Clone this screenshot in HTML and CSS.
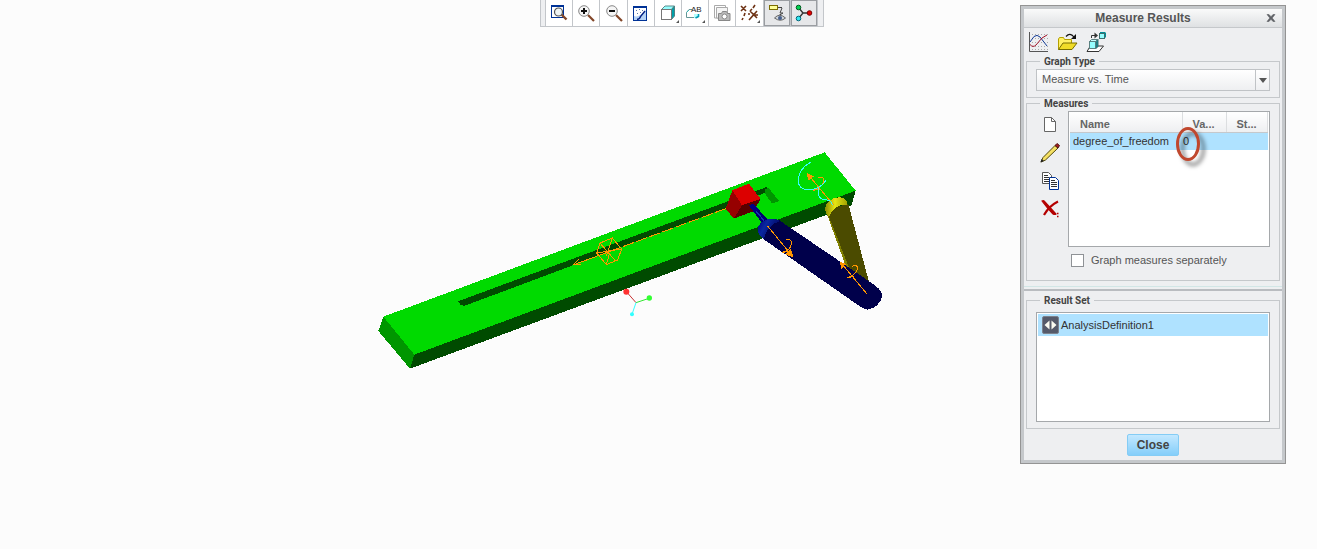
FILE: index.html
```html
<!DOCTYPE html>
<html lang="en">
<head>
    <meta charset="UTF-8">
    <meta name="viewport" content="width=device-width, initial-scale=1.0">
    <title>Measure Results</title>
    <link rel="stylesheet" href="styles.css">
</head>
<body>

<main class="viewport">

    <!-- 3D model -->
    <svg class="model" viewBox="0 0 1530 666" shape-rendering="crispEdges" role="img" aria-label="Slider crank mechanism">
        <defs>
            <linearGradient id="blue-head" x1="0" y1="0" x2="1" y2="0.5">
                <stop offset="0" stop-color="#000078"/>
                <stop offset="0.4" stop-color="#0a28a0"/>
                <stop offset="1" stop-color="#00005a"/>
            </linearGradient>
            <linearGradient id="yellow-head" x1="0" y1="0" x2="1" y2="0">
                <stop offset="0" stop-color="#8c8c00"/>
                <stop offset="0.45" stop-color="#e6e614"/>
                <stop offset="1" stop-color="#a0a000"/>
            </linearGradient>
        </defs>
        <!-- Green rail -->
        <polygon fill="#00da00" points="25,500 1349,7 1442,122 118,614"/>
        <polygon fill="#009600" points="25,500 10,543 105,656 118,614"/>
        <polygon fill="#004b00" points="118,614 1442,122 1429,167 105,656"/>
        <!-- Slot -->
        <polygon fill="#004b00" points="249,454 1175,111 1174,127 1035,181 270,467 258,466"/>
        <polygon fill="#009600" points="1170,119 1180,113 1212,153 1191,161 1170,130"/>
        <!-- Slide axis -->
        <g fill="none" stroke="#ff9600" stroke-width="3">
            <path d="M594 345L705 304M594 345l18-18M594 345l24-2"/>
            <path d="M705 304L1060 173" stroke-dasharray="34 8"/>
            <path d="M675 279L712 264L740 297L728 330L694 344L665 309ZM675 279l45 52M712 264l-18 55M665 309l75-12M694 344l10-36"/>
        </g>
        <!-- Yellow link -->
        <g transform="translate(975 -30)">
            <polygon fill="#808000" points="380,220 392,222 450,384 440,386"/>
            <polygon fill="#4b4b00" points="386,228 392,212 410,200 445,192 508,430 470,412 448,385"/>
            <path fill="url(#yellow-head)" d="M375 208C374 188 398 170 420 172C436 174 442 182 442 195C424 192 400 198 388 229C380 226 376 218 375 208Z"/>
        </g>
        <!-- Blue rod -->
        <g transform="translate(975 -30)">
            <polygon fill="#00006e" points="147,197 160,190 202,238 188,252"/>
            <path stroke="#1432b4" stroke-width="4" d="M154 196L192 242"/>
            <path fill="#00004b" d="M175 270C180 245 210 230 238 241L512 427C530 436 548 456 547 469C542 490 525 506 502 509C496 508 486 504 478 498L190 297C180 289 174 281 175 270Z"/>
            <path fill="url(#blue-head)" d="M174 265C176 243 212 226 240 243C218 250 196 268 192 297C180 290 172 280 174 265Z"/>
        </g>
        <!-- Red slider -->
        <g transform="translate(975 -30)">
            <polygon fill="#dc0000" points="97,151 147,131 182,177 126,196"/>
            <polygon fill="#960000" points="97,151 126,196 101,236 77,206"/>
            <polygon fill="#5a0000" points="126,196 182,177 160,214 101,236"/>
            <polygon fill="#000082" points="147,197 160,190 176,209 164,219"/>
        </g>
        <!-- Joint symbols -->
        <g transform="translate(975 -30)" fill="none" stroke="#ff9600" stroke-width="3">
            <path d="M202 257L278 350M278 350l-20-8M278 350l-6-22M258 298c14-2 18 6 16 14c-2 14-14 22-28 25l18-2M262 330l10 14"/>
            <path d="M500 461L422 367M422 367l17 7M422 367l3 20M455 380c14-8 20 0 17 8c-4 14-14 20-30 25l20-4"/>
            <path d="M400 194L322 101M322 101l19 10M322 101l4 20M354 114c12-5 20 0 16 12c-4 14-14 20-30 25l20-4"/>
            <path fill="#ff9600" d="M278 350l-18-8l12-12ZM322 101l14 8l-8 10ZM422 367l12 6l-8 10Z"/>
            <path stroke="#32ffff" d="M332 67C300 83 285 120 302 142C320 156 360 150 378 121M356 142C352 165 358 177 370 178C382 179 398 182 397 196"/>
        </g>
        <!-- Orientation triad -->
        <g stroke-width="3" shape-rendering="auto">
            <path stroke="#c83232" d="M755 426L783 458"/>
            <path stroke="#32e632" d="M783 458L822 445"/>
            <path stroke="#32ffff" d="M783 458L771 493"/>
            <circle cx="754" cy="425" r="9" fill="#ff3232"/>
            <circle cx="823" cy="444" r="8" fill="#32ff32"/>
            <circle cx="771" cy="493" r="6" fill="#32ffff"/>
        </g>
    </svg>

    <!-- Graphics toolbar -->
    <div class="toolbar">
        <button type="button" aria-label="Refit">
            <svg viewBox="0 0 24 24">
                <rect x="4.500" y="4.500" width="12" height="12" fill="#fff" stroke="#003296"/>
                <path d="M4 5h13" stroke="#003296" stroke-width="2"/>
                <path d="M14.500 13.500l5 5" stroke="#824628" stroke-width="2.4"/>
                <circle cx="11.500" cy="11" r="4" fill="#f0f5f5" stroke="#555" stroke-width="1.2"/>
            </svg>
        </button>
        <button type="button" aria-label="Zoom In">
            <svg viewBox="0 0 24 24">
                <path d="M14 14l6 6" stroke="#824628" stroke-width="2.2"/>
                <circle cx="10" cy="10" r="5.3" fill="#f5f5f5" stroke="#888"/>
                <path d="M7 10h6M10 7v6" stroke="#111" stroke-width="2"/>
            </svg>
        </button>
        <button type="button" aria-label="Zoom Out">
            <svg viewBox="0 0 24 24">
                <path d="M14 14l6 6" stroke="#824628" stroke-width="2.2"/>
                <circle cx="10" cy="10" r="5.3" fill="#f5f5f5" stroke="#888"/>
                <path d="M7 10h6" stroke="#111" stroke-width="2"/>
            </svg>
        </button>
        <button type="button" aria-label="Repaint">
            <svg viewBox="0 0 24 24">
                <rect x="4.500" y="5.500" width="13" height="14" fill="#fff" stroke="#003296"/>
                <path d="M4 6h14" stroke="#003296" stroke-width="2"/>
                <path d="M5 19V15Q10 17 17 9V19Z" fill="#b4d2f5"/>
                <path d="M16 10L11.500 15.500Q11 18 8 18.500" fill="none" stroke="#001e82" stroke-width="1.4"/>
                <path d="M7 9.500h1M10 8.500h1M8 12.500h1M11 11.500h1M13 9.500h1" stroke="#5a78aa"/>
            </svg>
        </button>
        <button type="button" aria-label="Display Style">
            <svg viewBox="0 0 24 24">
                <path d="M5.500 8.500L9 5H18.500L15.500 8.500Z" fill="#96ffff" stroke="#5a8c8c"/>
                <path d="M15.500 8.500L18.500 5V15L15.500 18.500Z" fill="#00a0aa" stroke="#508282"/>
                <rect x="5.500" y="8.500" width="10" height="10" fill="#fff" stroke="#777"/>
                <path d="M23 19v3h-3Z" fill="#555"/>
            </svg>
        </button>
        <button type="button" aria-label="Saved Orientations">
            <svg viewBox="0 0 24 24">
                <path d="M9 8.500H6L3.500 11.500V16.500H12" fill="#fff" stroke="#649696"/>
                <path d="M3.500 11.500L6 9" stroke="#32b4b4"/>
                <path d="M11 13h4v4h-4z" fill="#b4ffff"/>
                <path d="M15.500 13v2.500l-3 1.500" fill="none" stroke="#009bb4" stroke-width="1.6"/>
                <text class="icon-text" x="8" y="11">AB</text>
                <path d="M22 19v3h-3Z" fill="#555"/>
            </svg>
        </button>
        <button type="button" aria-label="View Manager">
            <svg viewBox="0 0 24 24">
                <path d="M4.500 4.500H15.500V17H4.500Z" fill="#fff" stroke="#aaa"/>
                <path d="M6.500 6.500H17.500V17H6.500Z" fill="#f5f5f5" stroke="#aaa"/>
                <path d="M8.500 12.500h3l1-2h4l1 2h2.500v7H8.500Z" fill="#bbb" stroke="#888"/>
                <circle cx="14.500" cy="15.500" r="2.500" fill="#fff" stroke="#888"/>
            </svg>
        </button>
        <button type="button" aria-label="Datum Display">
            <svg viewBox="0 0 24 24">
                <path d="M3 5l5 5M8 5l-5 5M12 10l7 7M19 10l-8 9M17 4l-2 3M14 8l-2 2M7 12l-1 3M5 17l-1 2M10 13h2M17 14h3" stroke="#6e3214" stroke-width="1.6"/>
                <path d="M22 19v3h-3Z" fill="#555"/>
            </svg>
        </button>
        <button type="button" class="pressed" aria-pressed="true" aria-label="Annotation Display">
            <svg viewBox="0 0 24 24">
                <rect x="4.500" y="4.500" width="8" height="4" fill="#ffff96" stroke="#7d6e00"/>
                <path d="M13 6.500h4M17 7l-2 5h3l-5 3" fill="none" stroke="#444"/>
                <path d="M9.500 17q5-5.500 11 0q-5 4.500-11 0Z" fill="#d2d7dc" stroke="#666"/>
                <circle cx="15" cy="17" r="2" fill="#465f8c"/>
            </svg>
        </button>
        <button type="button" class="pressed" aria-pressed="true" aria-label="Spin Center">
            <svg viewBox="0 0 24 24">
                <path d="M6.500 6.500L11 12L6.500 17.500M11 12h7" fill="none" stroke="#333" stroke-width="1.4"/>
                <circle cx="6.500" cy="6.500" r="2.300" fill="#00d250" stroke="#005a1e"/>
                <circle cx="17.500" cy="12" r="2.300" fill="#e60000" stroke="#780000"/>
                <circle cx="6.500" cy="17.500" r="2.300" fill="#32e6f0" stroke="#006478"/>
            </svg>
        </button>
    </div>

    <!-- Measure Results dialog -->
    <section class="dialog" aria-labelledby="dialog-title">
        <header class="title-bar">
            <h1 id="dialog-title">Measure Results</h1>
            <button type="button" class="close-x" aria-label="Close window">
                <svg viewBox="0 0 10 10"><path d="M1 1.500h2l2 2.200l2-2.200h2L6.200 5L9 8.500H7L5 6.300L3 8.500H1L3.800 5Z" fill="#5f6266" stroke="#5f6266" stroke-width="0.600"/></svg>
            </button>
        </header>

        <div class="dialog-tools">
            <button type="button" aria-label="Graph">
                <svg viewBox="0 0 24 24">
                    <path d="M5 4.500h16M5 8.500h16M5 12.500h16M5 16.500h16M5 19.500h16" stroke="#aaa" stroke-dasharray="1 2"/>
                    <path d="M2.500 2v19.500H21" fill="none" stroke="#555"/>
                    <path d="M3 12L7 6.500Q10 4 13 7L20 16" fill="none" stroke="#143c96"/>
                    <path d="M3 14.500Q6 18 9 15L15 8L20 5" fill="none" stroke="#a01428"/>
                </svg>
            </button>
            <button type="button" aria-label="Open">
                <svg viewBox="0 0 24 24">
                    <path d="M2.500 19.500V9l1-1.500h4l1 2h7v4" fill="#fff064" stroke="#b4a000"/>
                    <path d="M2.500 19.500L7 13h14l-5 6.500Z" fill="#f0dc28" stroke="#786e00"/>
                    <path d="M10 6.500Q14 2 18 7" fill="none" stroke="#111" stroke-width="1.200"/>
                    <path d="M20 4v5h-5Z" fill="#111"/>
                </svg>
            </button>
            <button type="button" aria-label="Load Result Set">
                <svg viewBox="0 0 24 24">
                    <path d="M5 16.500L2 21.500H14L18.500 16H13" fill="#fff" stroke="#333"/>
                    <path d="M4.500 11.500l2-2h6l-1.500 2Z" fill="#c8ffff" stroke="#5a8282"/>
                    <path d="M11 11.500l2-2v7l-2 2Z" fill="#008c96" stroke="#3c6e6e"/>
                    <rect x="4.500" y="11.500" width="6" height="7" fill="#96ffff" stroke="#5a8282"/>
                    <rect x="14.500" y="3.500" width="5" height="5" fill="#96ffff" stroke="#3c6e6e"/>
                    <path d="M20.500 2.500v5M15 2.500h5" stroke="#008c96"/>
                    <path d="M6.500 8V5.500H11" fill="none" stroke="#333"/>
                    <path d="M9.500 2.500l3.500 3l-3.500 3Z" fill="#333"/>
                </svg>
            </button>
        </div>

        <fieldset class="graph-type">
            <legend><label for="graph-type">Graph Type</label></legend>
            <div class="select-box">
                <select id="graph-type">
                    <option>Measure vs. Time</option>
                </select>
                <span class="select-arrow"></span>
            </div>
        </fieldset>

        <fieldset class="measures">
            <legend>Measures</legend>
            <div class="measures-row">
                <div class="measure-tools">
                    <button type="button" aria-label="New measure">
                        <svg viewBox="0 0 24 24">
                            <path d="M6.500 5.500h7l4 4v10h-11Z" fill="#fff" stroke="#666"/>
                            <path d="M13.500 5.500v4h4" fill="none" stroke="#666"/>
                        </svg>
                    </button>
                    <button type="button" aria-label="Edit measure">
                        <svg viewBox="0 0 24 24">
                            <path d="M3 22l2-4.500L17 5.500l3 2.500L7.500 20Z" fill="#f5e164" stroke="#50460a"/>
                            <path d="M17 5.500l2-2l2.500 2l-1.500 2.500Z" fill="#a01e1e" stroke="#501414"/>
                            <path d="M2.500 22.500l1-3.500l2.500 2Z" fill="#222"/>
                        </svg>
                    </button>
                    <button type="button" aria-label="Copy measure">
                        <svg viewBox="0 0 24 24">
                            <path d="M4.500 4.500h6l3 3v8h-9Z" fill="#fff" stroke="#555"/>
                            <path d="M6 7.500h4M6 9.500h5M6 11.500h5M6 13.500h5" stroke="#333"/>
                            <path d="M11.500 9.500h6l3 3v9h-9Z" fill="#fff" stroke="#003296"/>
                            <path d="M13 12.500h4M13 14.500h6M13 16.500h6M13 18.500h6" stroke="#333"/>
                        </svg>
                    </button>
                    <button type="button" aria-label="Delete measure">
                        <svg viewBox="0 0 24 24">
                            <path d="M4 5q2-1 3 1l11 12q-1 1-3 0Q9 12 4 5Z" fill="#b40000" stroke="#b40000" stroke-width="1.200"/>
                            <path d="M20 5.500Q11 10 6 19" fill="none" stroke="#b40000" stroke-width="2.200"/>
                            <path d="M19 17.500h1.500M19 20.500h1.500" stroke="#b40000" stroke-width="1.500"/>
                        </svg>
                    </button>
                </div>
                <div class="measure-list">
                    <table>
                        <thead>
                            <tr>
                                <th class="col-name">Name</th>
                                <th class="col-value">Va...</th>
                                <th>St...</th>
                            </tr>
                        </thead>
                        <tbody>
                            <tr>
                                <td>degree_of_freedom</td>
                                <td class="value">0<span class="callout"></span></td>
                                <td></td>
                            </tr>
                        </tbody>
                    </table>
                </div>
            </div>
            <div class="check-row">
                <input type="checkbox" id="separate">
                <label for="separate">Graph measures separately</label>
            </div>
        </fieldset>

        <hr>

        <fieldset class="result-set">
            <legend>Result Set</legend>
            <ul class="result-list">
                <li>
                    <svg viewBox="0 0 18 18">
                        <rect x="0.500" y="0.500" width="16" height="17" rx="1.500" fill="#555a6a" stroke="#7d828c"/>
                        <path d="M2.500 9l5-4.500v9ZM14.500 9l-5-4.500v9Z" fill="#fafaf0"/>
                    </svg>
                    AnalysisDefinition1
                </li>
            </ul>
        </fieldset>

        <footer class="dialog-footer">
            <button type="button" class="close-button">Close</button>
        </footer>
    </section>

</main>

</body>
</html>
```

FILE: styles.css
```css
/* General styling */
* {
    box-sizing: border-box;
}

body {
    margin: 0;
    background-color: #fcfcfc;
    color: #333;
    font-family: "Liberation Sans", Arial, sans-serif;
    font-size: 11px;
}

button {
    padding: 0;
    border: 0;
    background: none;
    font: inherit;
    color: inherit;
}

svg {
    display: block;
}

.viewport {
    position: relative;
    min-height: 100vh;
    overflow: hidden;
}

/* Model on the canvas */
.model {
    position: absolute;
    left: 375px;
    top: 150px;
    width: 510px;
}

/* Graphics toolbar */
.toolbar {
    position: absolute;
    top: 0;
    left: 540px;
    display: flex;
    width: 284px;
    padding: 0 5px 0 4px;
    border: 1px solid #c3c6ca;
    border-top: 0;
    background-color: #eeeff1;
}

.toolbar button {
    display: flex;
    flex: 1;
    justify-content: center;
    padding: 1px 0;
    border-left: 1px solid #c3c6ca;
    background-color: #fff;
}

.toolbar button:last-child {
    border-right: 1px solid #c3c6ca;
}

.toolbar .pressed {
    background-color: #e6e7e9;
    box-shadow: inset 0 0 0 1px #9a9da1;
}

.toolbar svg,
.dialog-tools svg,
.measure-tools svg {
    flex: none;
    width: 24px;
    height: 24px;
}

.icon-text {
    font-family: "Liberation Sans", Arial, sans-serif;
    font-size: 8px;
    fill: #222;
}

/* Dialog window */
.dialog {
    position: absolute;
    top: 5px;
    right: 31px;
    width: 266px;
    border: 4px solid #c5c8cb;
    outline: 1px solid #949494;
    outline-offset: -1px;
    background-color: #eeeff1;
}

.title-bar {
    display: flex;
    align-items: center;
    height: 19px;
    padding-right: 6px;
    border-bottom: 1px solid #c5c8cb;
    background: linear-gradient(#fafafa, #dfe1e3);
}

.title-bar h1 {
    flex: 1;
    margin: 0;
    padding-right: 4px;
    font-size: 12px;
    line-height: 18px;
    text-align: center;
    color: #555;
}

.close-x svg {
    width: 10px;
    height: 10px;
}

.dialog-tools {
    display: flex;
    gap: 5px;
    padding: 2px 3px;
}

/* Groups */
fieldset {
    min-width: 0;
    margin: 0 2px;
    padding: 3px 9px 6px;
    border: 1px solid #c5c8cb;
}

legend {
    margin-left: 4px;
    padding: 2px 4px 0;
    font-family: Roboto, "Liberation Sans", sans-serif;
    font-size: 10px;
    font-weight: bold;
    line-height: 8px;
    color: #444;
}

legend label {
    display: block;
}

.select-box {
    position: relative;
}

.select-box select {
    display: block;
    width: 100%;
    height: 22px;
    padding: 0 5px 2px;
    border: 1px solid #c0c3c6;
    border-radius: 0;
    appearance: none;
    background: linear-gradient(#fff, #eeeff1);
    font: inherit;
    color: #555;
}

.select-arrow {
    position: absolute;
    top: 1px;
    right: 1px;
    bottom: 1px;
    display: flex;
    align-items: center;
    justify-content: center;
    width: 14px;
    border-left: 1px solid #c0c3c6;
    pointer-events: none;
}

.select-arrow::before {
    content: "";
    border: 4px solid transparent;
    border-top: 5px solid #555;
    border-bottom: 0;
}

/* Measures */
.measures {
    padding-bottom: 13px;
}

.measures-row {
    display: flex;
    gap: 6px;
}

.measure-tools {
    display: flex;
    flex-direction: column;
    gap: 4px;
    padding: 1px 0 0 2px;
}

.measure-list {
    flex: 1;
    min-height: 136px;
    padding: 0 1px;
    border: 1px solid #a5a8ab;
    background-color: #fff;
}

table {
    width: 100%;
    border-collapse: collapse;
    table-layout: fixed;
}

th {
    height: 20px;
    padding: 5px 0 0 10px;
    border-right: 1px solid #dcdee0;
    border-bottom: 1px solid #c5c8cb;
    background: linear-gradient(#fff, #eeeff1);
    line-height: 14px;
    text-align: left;
    color: #666;
}

.col-name {
    width: 112px;
}

.col-value {
    width: 44px;
}

td {
    height: 17px;
    padding: 0 0 0 3px;
    background-color: #afe2ff;
    line-height: 17px;
}

td.value {
    position: relative;
    padding-left: 1px;
}

.callout {
    position: absolute;
    top: -6px;
    left: -6px;
    width: 24px;
    height: 34px;
    border: 3px solid #c0482e;
    border-radius: 50%;
    filter: drop-shadow(5px 5px 2px rgba(0, 0, 0, 0.5));
}

.check-row {
    display: flex;
    align-items: center;
    gap: 7px;
    padding: 7px 0 0 35px;
    line-height: 13px;
    color: #555;
}

.check-row input {
    width: 13px;
    height: 13px;
    margin: 0;
    border: 1px solid #8f9296;
    appearance: none;
    background-color: #fff;
}

hr {
    height: 5px;
    margin: 5px 0 4px;
    border: 0;
    border-top: 1px solid #d2e6e6;
    border-bottom: 2px solid #b9bcc0;
}

/* Result set */
.result-set {
    padding-top: 7px;
}

.result-list {
    min-height: 110px;
    margin: 0;
    padding: 1px;
    border: 1px solid #a5a8ab;
    background-color: #fff;
    list-style: none;
}

.result-list li {
    display: flex;
    align-items: center;
    gap: 1px;
    height: 22px;
    padding-left: 4px;
    background-color: #afe2ff;
}

.result-list svg {
    width: 18px;
    height: 18px;
}

/* Footer */
.dialog-footer {
    display: flex;
    justify-content: center;
    padding: 5px 0 4px;
}

.close-button {
    height: 22px;
    padding: 0 9px;
    border: 1px solid #84ccf5;
    border-radius: 2px;
    background: linear-gradient(#c3e8ff, #84cefa);
    font-weight: bold;
    font-size: 12px;
    color: #444;
}
```
